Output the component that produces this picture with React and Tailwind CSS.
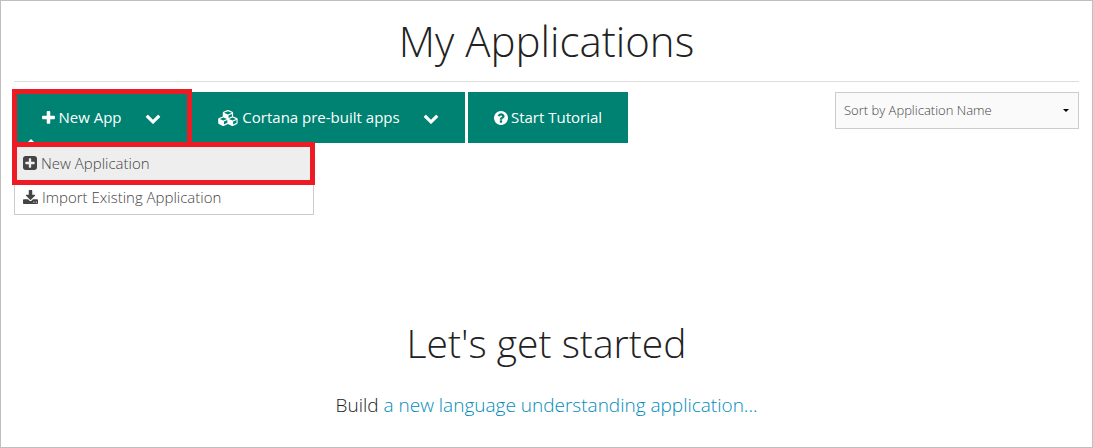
const icons = {
  plus: {
    box: "192 128 1408 1536",
    d: "M1600 736v192q0 40-28 68t-68 28h-416v416q0 40-28 68t-68 28h-192q-40 0-68-28t-28-68v-416h-416q-40 0-68-28t-28-68v-192q0-40 28-68t68-28h416v-416q0-40 28-68t68-28h192q40 0 68 28t28 68v416h416q40 0 68 28t28 68z",
  },
  chevron: {
    box: "0 0 1792 1792",
    d: "M1683 808l-742 741q-19 19-45 19t-45-19l-742-741q-19-19-19-45.5t19-45.5l166-165q19-19 45-19t45 19l531 531 531-531q19-19 45-19t45 19l166 165q19 19 19 45.5t-19 45.5z",
  },
  cubes: {
    box: "0 0 2304 1792",
    d: "M640 1632l384-192v-314l-384 164v342zm-64-454l404-173-404-173-404 173zm1088 454l384-192v-314l-384 164v342zm-64-454l404-173-404-173-404 173zm-448-293l384-165v-266l-384 164v267zm-64-379l441-189-441-189-441 189zm1088 518v416q0 36-19 67t-52 47l-448 224q-25 14-57 14t-57-14l-448-224q-4-2-7-4-2 2-7 4l-448 224q-25 14-57 14t-57-14l-448-224q-33-16-52-47t-19-67v-416q0-38 21.5-70t56.5-48l434-186v-400q0-38 21.5-70t56.5-48l448-192q23-10 50-10t50 10l448 192q35 16 56.5 48t21.5 70v400l434 186q36 16 57 48t21 70z",
  },
  question: {
    box: "128 128 1536 1536",
    d: "M1024 1376v-192q0-14-9-23t-23-9h-192q-14 0-23 9t-9 23v192q0 14 9 23t23 9h192q14 0 23-9t9-23zm256-672q0-88-55.5-163t-138.5-116-170-41q-243 0-371 213-15 24 8 42l132 100q7 6 19 6 16 0 25-12 53-68 86-92 34-24 86-24 48 0 85.5 26t37.5 59q0 38-20 61t-68 45q-63 28-115.5 86.5t-52.5 125.5v36q0 14 9 23t23 9h192q14 0 23-9t9-23q0-19 21.5-49.5t54.5-49.5q32-18 49-28.5t46-35 44.5-48 28-60.5 12.5-81zm384 192q0 209-103 385.5t-279.5 279.5-385.5 103-385.5-103-279.5-279.5-103-385.5 103-385.5 279.5-279.5 385.5-103 385.5 103 279.5 279.5 103 385.5z",
  },
  plusSquare: {
    box: "128 128 1536 1536",
    d: "M1408 960v-128q0-26-19-45t-45-19h-320v-320q0-26-19-45t-45-19h-128q-26 0-45 19t-19 45v320h-320q-26 0-45 19t-19 45v128q0 26 19 45t45 19h320v320q0 26 19 45t45 19h128q26 0 45-19t19-45v-320h320q26 0 45-19t19-45zm256-544v960q0 119-84.5 203.5t-203.5 84.5h-960q-119 0-203.5-84.5t-84.5-203.5v-960q0-119 84.5-203.5t203.5-84.5h960q119 0 203.5 84.5t84.5 203.5z",
  },
  download: {
    box: "64 0 1664 1536",
    d: "M1344 1344q0-26-19-45t-45-19-45 19-19 45 19 45 45 19 45-19 19-45zm256 0q0-26-19-45t-45-19-45 19-19 45 19 45 45 19 45-19 19-45zm128-224v320q0 40-28 68t-68 28h-1472q-40 0-68-28t-28-68v-320q0-40 28-68t68-28h465l135 136q58 56 136 56t136-56l136-136h464q40 0 68 28t28 68zm-325-569q17 41-14 70l-448 448q-18 19-45 19t-45-19l-448-448q-31-29-14-70 17-39 59-39h256v-448q0-26 19-45t45-19h256q26 0 45 19t19 45v448h256q42 0 59 39z",
  },
};

function Icon({ name, className }) {
  return (
    <svg viewBox={icons[name].box} fill="currentColor" aria-hidden="true" className={`shrink-0 ${className}`}>
      <path d={icons[name].d} />
    </svg>
  );
}

function ActionButton({ icon, iconClass, label, width, dropdown }) {
  return (
    <button
      type="button"
      aria-haspopup={dropdown ? "menu" : undefined}
      className={`flex h-[51px] items-center justify-center gap-[3px] bg-[#008272] text-[15px] font-normal text-white ${width}`}
    >
      <Icon name={icon} className={iconClass} />
      <span className="whitespace-nowrap">{label}</span>
      {dropdown && <Icon name="chevron" className="ml-5 size-4" />}
    </button>
  );
}

function MenuItem({ icon, iconClass, label, active }) {
  return (
    <li role="none">
      <button
        type="button"
        role="menuitem"
        className={`flex h-[34px] w-full items-center gap-1 px-2 text-left text-[15px] text-[#444444] ${active ? "bg-[#eeeeee]" : "bg-white"}`}
      >
        <Icon name={icon} className={iconClass} />
        <span>{label}</span>
      </button>
    </li>
  );
}

export default function App() {
  return (
    <main className="min-h-screen border border-[#bfbfbf] bg-white px-[13px] font-['Open_Sans','Noto_Sans',sans-serif] font-light text-[#222222]">
      <h1 className="border-b border-[#dddddd] pt-[10px] pb-[10px] text-center text-[42px] leading-[60px]">My Applications</h1>

      <div className="flex items-start justify-between pt-[10px]">
        <div className="flex gap-[3px]">
          <div className="relative">
            <ActionButton icon="plus" iconClass="h-[14px] w-[13px]" label="New App" width="w-[175px]" dropdown />
            <div className="pointer-events-none absolute -top-[3px] -right-[3px] -bottom-1 -left-[2px] z-20 border-5 border-[#ed1c24]" />
            <div className="absolute top-full left-0 z-10 w-[300px]">
              <div className="absolute -top-1 left-[13px] border-x-4 border-b-4 border-x-transparent border-b-white" />
              <ul role="menu" className="border border-[#cccccc] bg-white">
                <li role="none" className="h-[2px]" />
                <MenuItem icon="plusSquare" iconClass="size-[14px]" label="New Application" active />
                <MenuItem icon="download" iconClass="h-[14px] w-[15px]" label="Import Existing Application" />
              </ul>
              <div className="pointer-events-none absolute -top-px -right-px -left-[2px] h-[43px] border-5 border-[#ed1c24]" />
            </div>
          </div>
          <ActionButton icon="cubes" iconClass="h-4 w-[21px]" label="Cortana pre-built apps" width="w-[273px]" dropdown />
          <ActionButton icon="question" iconClass="size-[14px]" label="Start Tutorial" width="w-[160px]" />
        </div>

        <div className="relative w-[244px]">
          <select
            aria-label="Sort applications"
            className="h-[37px] w-full appearance-none rounded-none border border-[#cccccc] bg-[#fafafa] px-2 text-[13px] font-light text-[#444444]"
          >
            <option>Sort by Application Name</option>
          </select>
          <svg viewBox="0 0 6 3" className="pointer-events-none absolute top-[17px] right-[10px] h-[3px] w-[6px]" aria-hidden="true">
            <path d="M0 0h6L3 3z" fill="#000000" />
          </svg>
        </div>
      </div>

      <section className="pt-[170px] text-center">
        <h2 className="text-[39px] leading-[60px]">Let's get started</h2>
        <p className="pt-[18px] text-[19px] leading-7">
          Build{" "}
          <a href="#new-application" className="text-[#008cba]">
            a new language understanding application...
          </a>
        </p>
      </section>
    </main>
  );
}
